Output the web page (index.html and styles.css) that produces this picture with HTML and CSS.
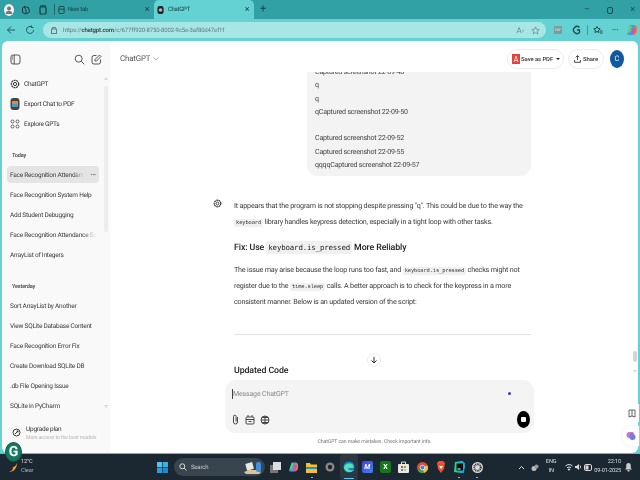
FILE: index.html
```html
<!DOCTYPE html>
<html lang="en">
<head>
<meta charset="utf-8">
<title>ChatGPT</title>
<link rel="stylesheet" href="styles.css">
</head>
<body>
<div class="screen">
  <div class="tabstrip">
    <div class="tab-tools">
      <span class="avatar-mini"><svg width="10" height="10" viewBox="0 0 10 10"><circle cx="5" cy="3.400" r="2" fill="#777"/><path d="M1.500 9c.4-2.400 1.800-3.300 3.500-3.300S8.100 6.600 8.500 9z" fill="#777"/></svg></span>
      <svg class="tool-icon" width="10" height="10" viewBox="0 0 10 10" fill="none" stroke="#1c3c40" stroke-width="1"><path d="M3 1.500 7.500 2.500 8.500 7 5 9 1.500 7.500V3z"/><path d="M3 1.500 5 5 5 9"/></svg>
      <svg class="tool-icon" width="10" height="10" viewBox="0 0 10 10" fill="none" stroke="#1c3c40" stroke-width="1.200"><rect x="2" y="2" width="6" height="7" rx="1"/><path d="M2 1h6" /></svg>
      <span class="tab-divider"></span>
    </div>
    <div class="tab">
      <svg width="7" height="10" viewBox="0 0 8 10" fill="none" stroke="#1c3c40"><rect x="1" y="1" width="6" height="8" rx="1"/><path d="M1 4h6"/></svg>
      <span class="tab-title">New tab</span>
      <span class="tab-close">×</span>
    </div>
    <div class="tab tab-active">
      <svg width="7" height="10" viewBox="0 0 8 10"><rect x=".5" y=".5" width="7" height="9" rx="2.500" fill="#222"/><circle cx="4" cy="5" r="2" fill="#bbb"/></svg>
      <span class="tab-title">ChatGPT</span>
      <span class="tab-close">×</span>
    </div>
    <span class="new-tab">+</span>
    <div class="win-controls">
      <span>–</span>
      <svg width="8" height="8" viewBox="0 0 8 8" fill="none" stroke="#17474a"><rect x="1.500" y="1.500" width="5" height="6" rx="1.500"/></svg>
      <span>×</span>
    </div>
  </div>

  <div class="toolbar">
    <svg class="nav-icon" width="10" height="10" viewBox="0 0 10 10" fill="none" stroke="#26565a" stroke-width="1"><path d="M9 5H1.500M5 1.500 1.500 5 5 8.500"/></svg>
    <svg class="nav-icon" width="10" height="10" viewBox="0 0 10 10" fill="none" stroke="#26565a" stroke-width="1"><path d="M8.500 5A3.500 3.500 0 1 1 6.500 1.800M6.500 .5V2.500H8.500"/></svg>
    <div class="address">
      <svg width="6" height="8" viewBox="0 0 6 8" fill="none" stroke="#5f7f80"><rect x=".5" y="3" width="5" height="4.500"/><path d="M1.500 3V1.500h3V3"/></svg>
      <span class="url"><span class="url-dim">https://</span><b>chatgpt.com</b><span class="url-dim">/c/677ff920-8750-8002-9c5e-3af80d47ef1f</span></span>
      <span class="addr-end">
        <span class="read-a">A<small>ᴬ</small></span>
        <svg width="9" height="9" viewBox="0 0 10 10" fill="none" stroke="#6a8f90" stroke-width=".9"><path d="m5 1 1.200 2.700 2.900.3-2.200 1.900.7 2.900L5 7.300 2.400 8.800l.7-2.900L.9 4l2.900-.3z"/></svg>
      </span>
    </div>
    <div class="ext-group">
      <span class="ext-pdf">PDF</span>
      <svg class="ext-g" width="9" height="10" viewBox="0 0 9 10" fill="none" stroke="#24484b" stroke-width="1.300"><path d="M7.500 2.500A3.500 3.500 0 1 0 7.500 7.500V5H5"/></svg>
      <span class="ext-divider"></span>
      <svg class="ext-fav" width="10" height="10" viewBox="0 0 10 10" fill="none" stroke="#24484b"><path d="m4 1.500 1 2 2.200.3-1.600 1.500.4 2.200-2-1-2 1 .4-2.200L.8 3.800 3 3.500z"/><path d="M7 6h2.500M7 8h2.500"/></svg>
      <span class="ext-more">···</span>
      <svg class="ext-copilot" width="12" height="12" viewBox="0 0 12 12"><path d="M4 1h4c1.500 0 2 1 1.500 2L7 11H3C1.500 11 1 10 1.500 9z" fill="#3aa0e8"/><path d="M8 1c2 0 3 1 3 3v3c0 2-2 4-4 4l2-6z" fill="#f0783c"/><path d="M1.500 9 4 2h2L4 8z" fill="#7ad04a"/><path d="M7 4l3 1-2 5-3 1z" fill="#d84fb0"/></svg>
    </div>
  </div>

  <div class="frame">
    <aside class="sidebar">
      <div class="side-head">
        <svg class="ink-icon" width="11" height="11" viewBox="0 0 11 11" fill="none" stroke="#444" stroke-width=".9"><rect x="1" y="1" width="9" height="9" rx="2"/><path d="M4.200 1v9"/><path d="M2 3h1M2 5h1" /></svg>
        <span class="side-head-right">
          <svg width="11" height="11" viewBox="0 0 11 11" fill="none" stroke="#444" stroke-width=".9"><circle cx="4.700" cy="4.700" r="3.500"/><path d="m7.300 7.300 3 3"/></svg>
          <svg width="11" height="11" viewBox="0 0 11 11" fill="none" stroke="#444" stroke-width=".9"><path d="M5.500 1.500H3A2 2 0 0 0 1 3.500v4.500a2 2 0 0 0 2 2h4.500a2 2 0 0 0 2-2V5.500"/><path d="M4 7V5.500L8.500 1 10 2.500 5.500 7z"/></svg>
        </span>
      </div>
      <div class="side-scroll">
        <div class="side-link"><svg width="10" height="10" viewBox="0 0 10 10" fill="none" stroke="#333"><circle cx="5" cy="5" r="3.700" stroke-dasharray="2 .6" stroke-width="1.200"/><circle cx="5" cy="5" r="1.600"/></svg><span>ChatGPT</span></div>
        <div class="side-link"><svg width="10" height="14" viewBox="0 0 10 14"><rect x=".5" y="1" width="9" height="12" rx="3" fill="#444"/><rect x="2" y="4" width="6" height="3" fill="#e58a3c"/><rect x="2" y="7" width="6" height="3" fill="#4a9ac2"/></svg><span>Export Chat to PDF</span></div>
        <div class="side-link"><svg width="10" height="10" viewBox="0 0 10 10" fill="none" stroke="#444" stroke-width=".8"><circle cx="2.500" cy="2.500" r="1.500"/><circle cx="7.500" cy="2.500" r="1.500"/><circle cx="2.500" cy="7.500" r="1.500"/><circle cx="7.500" cy="7.500" r="1.500"/></svg><span>Explore GPTs</span></div>
        <h3 class="side-label">Today</h3>
        <div class="chat chat-selected"><span class="chat-text fade">Face Recognition Attendance</span><span class="dots">···</span></div>
        <div class="chat"><span class="chat-text">Face Recognition System Help</span></div>
        <div class="chat"><span class="chat-text">Add Student Debugging</span></div>
        <div class="chat"><span class="chat-text fade">Face Recognition Attendance Sys</span></div>
        <div class="chat"><span class="chat-text">ArrayList of Integers</span></div>
        <h3 class="side-label label-second">Yesterday</h3>
        <div class="chat"><span class="chat-text">Sort ArrayList by Another</span></div>
        <div class="chat"><span class="chat-text">View SQLite Database Content</span></div>
        <div class="chat"><span class="chat-text">Face Recognition Error Fix</span></div>
        <div class="chat"><span class="chat-text">Create Download SQLite DB</span></div>
        <div class="chat"><span class="chat-text">.db File Opening Issue</span></div>
        <div class="chat"><span class="chat-text">SQLite in PyCharm</span></div>
        <div class="side-bar-track"><span class="arrow-up"></span><span class="thumb"></span><span class="arrow-down"></span></div>
      </div>
      <div class="upgrade">
        <span class="upgrade-icon"><svg width="9" height="9" viewBox="0 0 9 9" fill="none" stroke="#333" stroke-width="1"><circle cx="4.500" cy="4.500" r="3.500"/><path d="M3 6 6 3"/><path d="M4.500 3H6v1.500"/></svg></span>
        <div><div class="upgrade-title">Upgrade plan</div><div class="upgrade-sub">More access to the best models</div></div>
      </div>
    </aside>

    <main class="main">
      <header class="main-head">
        <div class="model">ChatGPT <svg width="6" height="4" viewBox="0 0 6 4" fill="none" stroke="#aaa"><path d="m.5.500 2.500 2.500L5.500.500"/></svg></div>
        <div class="head-actions">
          <button class="pill pill-pdf"><svg width="8" height="10" viewBox="0 0 8 10"><rect width="8" height="10" fill="#e2433a"/><path d="M4 2 2 8M4 2l2 6M2.500 6.500h3" stroke="#fff" stroke-width=".7" fill="none"/></svg>Save as PDF<span class="caret"></span></button>
          <button class="pill"><svg width="7" height="8" viewBox="0 0 7 8" fill="none" stroke="#333" stroke-width=".9"><path d="M3.500 5V.8M1.800 2.300 3.500.6l1.700 1.700M.6 5v2.300h5.800V5"/></svg>Share</button>
          <span class="user-avatar">C</span>
        </div>
      </header>
      <div class="conversation">
        <div class="thread">
          <div class="bubble">
            <p>Captured screenshot 22-09-48</p>
            <p>q</p>
            <p>q</p>
            <p>qCaptured screenshot 22-09-50</p>
            <p>&nbsp;</p>
            <p>Captured screenshot 22-09-52</p>
            <p>Captured screenshot 22-09-55</p>
            <p>qqqqCaptured screenshot 22-09-57</p>
          </div>
          <div class="answer">
            <span class="gpt-mark"><svg width="9" height="9" viewBox="0 0 10 10" fill="none" stroke="#333"><circle cx="5" cy="5" r="3.700" stroke-dasharray="2 .6" stroke-width="1.300"/><circle cx="5" cy="5" r="1.600"/></svg></span>
            <div class="answer-body">
              <p>It appears that the program is not stopping despite pressing "q". This could be due to the way the <code>keyboard</code> library handles keypress detection, especially in a tight loop with other tasks.</p>
              <h2>Fix: Use <code>keyboard.is_pressed</code> More Reliably</h2>
              <p>The issue may arise because the loop runs too fast, and <code>keyboard.is_pressed</code> checks might not register due to the <code>time.sleep</code> calls. A better approach is to check for the keypress in a more consistent manner. Below is an updated version of the script:</p>
              <hr>
              <h2 class="updated">Updated Code</h2>
            </div>
          </div>
        </div>
        <span class="scroll-down"><svg width="8" height="8" viewBox="0 0 8 8" fill="none" stroke="#333"><path d="M4 .8v6M1.500 4.500 4 7l2.500-2.500"/></svg></span>
        <div class="main-scroll"><span class="arrow-up"></span><span class="main-thumb"></span><span class="arrow-down"></span></div>
      </div>
      <div class="composer-wrap">
        <div class="composer">
          <div class="composer-input"><span class="caret-line"></span>Message ChatGPT<span class="dot"></span></div>
          <div class="composer-tools">
            <svg width="9" height="11" viewBox="0 0 9 11" fill="none" stroke="#333" stroke-width=".9"><path d="M6.500 3v5a2 2 0 0 1-4 0V2.500a1.300 1.300 0 0 1 2.600 0V7.500"/></svg>
            <svg width="10" height="11" viewBox="0 0 10 11" fill="none" stroke="#333" stroke-width=".9"><rect x="1" y="3" width="8" height="7" rx="1"/><path d="M1 5.500h8M3 3V1M7 3V1M3.500 7.500h3"/></svg>
            <svg width="10" height="10" viewBox="0 0 10 10" fill="none" stroke="#333" stroke-width=".9"><circle cx="5" cy="5" r="4"/><path d="M1 5h8M5 1v8M2 2.500h6M2 7.500h6"/></svg>
            <span class="stop"><span></span></span>
          </div>
        </div>
        <div class="disclaimer">ChatGPT can make mistakes. Check important info.</div>
      </div>
      <span class="float-btn float-book"><svg width="8" height="9" viewBox="0 0 8 9" fill="none" stroke="#444" stroke-width=".8"><path d="M1 1h6v7L4 7 1 8z"/><path d="M4 1v6"/></svg></span>
      <span class="float-btn float-brain"><svg width="10" height="10" viewBox="0 0 10 10"><circle cx="3.500" cy="4" r="3" fill="#d66fc0"/><circle cx="6.500" cy="6" r="3" fill="#6e7fe0"/><circle cx="6" cy="3" r="2" fill="#9a6fd8"/></svg></span>
    </main>
  </div>

  <span class="grammarly">G</span>

  <footer class="taskbar">
    <div class="weather">
      <svg width="10" height="11" viewBox="0 0 10 11"><path d="M9 1c0 5-3 9-8 9 3-1 4-3 4-5 2 0 3-2 4-4z" fill="#f09a2c"/></svg>
      <div><div>12°C</div><div class="weather-sub">Clear</div></div>
    </div>
    <div class="task-center">
      <svg class="win-logo" width="11" height="11" viewBox="0 0 11 11"><rect width="5.200" height="5.200" fill="#4fc3f0"/><rect x="5.800" width="5.200" height="5.200" fill="#35b0ea"/><rect y="5.800" width="5.200" height="5.200" fill="#2a9ee0"/><rect x="5.800" y="5.800" width="5.200" height="5.200" fill="#1c8ad4"/></svg>
      <div class="search-pill">
        <svg width="8" height="8" viewBox="0 0 8 8" fill="none" stroke="#ddd"><circle cx="3.300" cy="3.300" r="2.500"/><path d="m5.200 5.200 2.300 2.300"/></svg>
        <span>Search</span>
        <svg class="search-art" width="18" height="14" viewBox="0 0 18 14"><path d="M0 12 5 10h9l3 2-2 2H2z" fill="#d9c595"/><rect x="2" y="3" width="7" height="7" fill="#e8e8e8" transform="rotate(-15 5 6)"/><rect x="12" y="2" width="5" height="10" rx="2" fill="#3f8ee0"/></svg>
      </div>
      <span class="task-icon"><svg width="11" height="11" viewBox="0 0 11 11"><rect y="3" width="8" height="8" fill="#777"/><rect x="3" width="8" height="8" fill="#ddd"/></svg></span>
      <span class="task-icon"><svg width="11" height="12" viewBox="0 0 12 12"><path d="M4 1h4c1.500 0 2 1 1.500 2L7 11H3C1.500 11 1 10 1.500 9z" fill="#3aa0e8"/><path d="M8 1c2 0 3 1 3 3v3c0 2-2 4-4 4l2-6z" fill="#f0783c"/><path d="M1.500 9 4 2h2L4 8z" fill="#7ad04a"/><path d="M7 4l3 1-2 5-3 1z" fill="#d84fb0"/></svg></span>
      <span class="task-icon running"><svg width="11" height="11" viewBox="0 0 11 11"><path d="M0 1h4l1 1.500h6V11H0z" fill="#f3c12e"/><rect y="5" width="11" height="2" fill="#2a8cd8"/></svg></span>
      <span class="task-icon"><svg width="10" height="12" viewBox="0 0 10 12"><circle cx="5" cy="6" r="4.500" fill="#888"/><circle cx="5" cy="6" r="2.200" fill="#222"/></svg></span>
      <span class="task-icon task-active"><svg width="12" height="12" viewBox="0 0 12 12"><circle cx="6" cy="6" r="5.500" fill="#1788c9"/><path d="M1 7c0-4 6-6 9-3 1 1 1 3-1 3H5c0 2 3 3 6 2-2 3-9 3-10-2z" fill="#55e0b0"/></svg></span>
      <span class="task-icon"><span class="tile tile-m">M</span></span>
      <span class="task-icon"><span class="tile tile-x">X</span></span>
      <span class="task-icon"><svg width="11" height="12" viewBox="0 0 11 12"><rect y="3" width="11" height="9" rx="1" fill="#e8e8e8"/><path d="M3.500 3V1h4v2" stroke="#ddd" fill="none"/><rect x="3" y="5" width="2" height="2" fill="#e8452c"/><rect x="6" y="5" width="2" height="2" fill="#7ab82c"/><rect x="3" y="8" width="2" height="2" fill="#2c9ae8"/><rect x="6" y="8" width="2" height="2" fill="#f0b82c"/></svg></span>
      <span class="task-icon"><svg width="11" height="11" viewBox="0 0 11 11"><circle cx="5.500" cy="5.500" r="5.500" fill="#e24a3a"/><path d="M5.500 5.500 1 8.500A5.500 5.500 0 0 0 7 11z" fill="#3aa856"/><path d="M5.500 5.500 10.500 3.500A5.500 5.500 0 0 1 7 11z" fill="#f4c430"/><circle cx="5.500" cy="5.500" r="2.300" fill="#3f80e8" stroke="#fff" stroke-width=".7"/></svg></span>
      <span class="task-icon"><svg width="10" height="12" viewBox="0 0 10 12"><path d="M1 2 3 0h4l2 2-1 6-3 4-3-4z" fill="#f0532c"/><path d="M3 5h4L5 8z" fill="#fff"/></svg></span>
      <span class="task-icon running"><svg width="11" height="12" viewBox="0 0 11 12"><path d="M1 1 9 0 11 6 8 12 0 11z" fill="#21d789"/><path d="M5 0 11 2 10 12 3 11z" fill="#1aa6e8"/><rect x="2.500" y="2.500" width="6.500" height="7" fill="#111"/><rect x="3.500" y="7.500" width="3" height="1" fill="#fff"/></svg></span>
      <span class="task-icon running"><svg width="11" height="11" viewBox="0 0 11 11"><circle cx="5.500" cy="5.500" r="5.500" fill="#ddd"/><circle cx="5.500" cy="5.500" r="3.300" fill="none" stroke="#333" stroke-dasharray="1 .6" stroke-width="2"/></svg></span>
    </div>
    <div class="tray">
      <svg width="7" height="5" viewBox="0 0 7 5" fill="none" stroke="#ddd"><path d="m1 4 2.500-2.500L6 4"/></svg>
      <svg width="8" height="9" viewBox="0 0 8 9"><circle cx="3" cy="5.500" r="2.500" fill="#bbb"/><circle cx="5.500" cy="3.500" r="2" fill="#999"/></svg>
      <div class="lang"><div>ENG</div><div>IN</div></div>
      <span class="sys-icons">
        <svg width="8" height="8" viewBox="0 0 8 8" fill="none" stroke="#ddd"><path d="M.5 3a5 5 0 0 1 7 0M2 4.800a3 3 0 0 1 4 0"/><circle cx="4" cy="6.500" r=".7" fill="#ddd"/></svg>
        <svg width="7" height="8" viewBox="0 0 7 8" fill="#ddd"><path d="M0 3h1.500L4 1v6L1.500 5H0z"/><path d="M5 2.500c.8 1 .8 2 0 3" stroke="#ddd" fill="none"/></svg>
        <svg width="8" height="7" viewBox="0 0 8 7"><rect x=".5" y=".5" width="7" height="6" rx="1.500" fill="none" stroke="#ddd"/><rect x="1.500" y="1.500" width="3" height="4" fill="#ddd"/></svg>
      </span>
      <div class="clock"><div>22:10</div><div>09-01-2025</div></div>
      <svg width="7" height="9" viewBox="0 0 7 9" fill="#ccc"><path d="M3.500 0C2 0 1.200 1 1.200 2.500V5L0 6.500h7L5.800 5V2.500C5.800 1 5 0 3.500 0z"/><rect x="2.500" y="7" width="2" height="1.500"/></svg>
    </div>
  </footer>
</div>
</body>
</html>
```
FILE: styles.css
```css
* { box-sizing: border-box; }
html, body { margin: 0; height: 100%; overflow: hidden; }
body { font-family: Roboto, "Liberation Sans", sans-serif; color: #333; text-rendering: geometricPrecision; }
svg { display: block; flex: none; }
p, h2, h3, hr { margin: 0; }

.screen {
  position: relative;
  width: 640px;
  height: 480px;
  display: flex;
  flex-direction: column;
  overflow: hidden;
  filter: blur(0.35px);
}

/* Tab strip */
.tabstrip { height: 19px; background: #32a1a5; display: flex; align-items: stretch; flex: none; }
.tab-tools { width: 55px; display: flex; align-items: center; padding-left: 4px; }
.avatar-mini { width: 10px; height: 12px; border-radius: 50%; background: #f2f2f2; overflow: hidden; display: flex; align-items: center; }
.tool-icon { margin-left: 7px; }
.tab-divider { width: 1px; height: 11px; background: #1f6a6e; margin-left: 6px; }
.tab { width: 99px; padding: 0 3px 0 3px; display: flex; align-items: center; gap: 3px; font-size: 6px; color: #173f42; letter-spacing: -.3px; }
.tab-title { flex: 1; }
.tab-close { font-size: 9px; color: #173f42; width: 8px; text-align: center; }
.tab-active { width: 100px; background: #64d1d2; border-radius: 5px 5px 0 0; gap: 4px; }
.new-tab { width: 18px; text-align: center; font-size: 11px; line-height: 18px; color: #173f42; }
.win-controls { margin-left: auto; width: 56px; display: flex; align-items: center; justify-content: space-between; padding-right: 5px; color: #17474a; font-size: 9px; }

/* Toolbar */
.toolbar { height: 22px; background: #64d1d2; display: flex; align-items: center; padding-left: 6px; flex: none; }
.nav-icon { margin-right: 9px; }
.address { margin-left: -1px; width: 503px; height: 16px; border-radius: 8px; background: #a8e6e5; display: flex; align-items: center; padding: 0 6px 0 8px; gap: 6px; font-size: 6px; }
.url { color: #222; letter-spacing: -.13px; }
.url b { font-weight: 500; color: #333; }
.url-dim { color: #5c7d7e; }
.addr-end { margin-left: auto; display: flex; align-items: center; gap: 7px; color: #6a8f90; font-size: 8px; }
.read-a small { font-size: 5px; }
.ext-group { display: flex; align-items: center; margin-left: 8px; flex: 1; }
.ext-pdf { width: 8px; height: 8px; background: #7d9d9c; color: #e4f4f4; font-size: 3px; line-height: 8px; text-align: center; }
.ext-g { margin-left: 10px; }
.ext-divider { width: 1px; height: 10px; margin-left: 6px; background: #3e9a9c; }
.ext-fav { margin-left: 5px; }
.ext-more { margin-left: 9px; color: #24484b; font-size: 7px; font-weight: 700; }
.ext-copilot { margin-left: 8px; }

/* Frame */
.frame { flex: 1; min-height: 0; background: #64d1d2; padding: 0 2px 0 2px; display: flex; }
.sidebar { width: 108px; flex: none; background: #f9f9f9; border-radius: 6px 0 0 6px; display: flex; flex-direction: column; min-height: 0; }
.side-head { height: 33px; padding: 4px 8px 0 8px; display: flex; align-items: center; justify-content: space-between; flex: none; }
.side-head-right { display: flex; gap: 6px; }
.side-scroll { position: relative; flex: 1; min-height: 0; padding: 0 8px 0 5px; }
.side-link { height: 20px; display: flex; align-items: center; gap: 4px; padding-left: 3px; font-size: 6.500px; color: #333; letter-spacing: -.25px; width: 95px; }
.side-link svg { width: 10px; }
.side-label { font-size: 5.600px; font-weight: 500; color: #444; height: 12px; line-height: 12px; margin: 16px 0 4px 5px; letter-spacing: -.2px; }
.label-second { margin-top: 16px; margin-bottom: 3px; }
.chat { width: 92px; height: 20px; padding: 0 3px; display: flex; align-items: center; font-size: 6.500px; color: #3a3a3a; letter-spacing: -.23px; overflow: hidden; white-space: nowrap; }
.chat-selected { background: #e4e4e4; border-radius: 4px; height: 17px; margin-bottom: 2px; margin-top: 1px; }
.chat-text { flex: 1; overflow: hidden; }
.fade { -webkit-mask-image: linear-gradient(90deg, #000 85%, transparent); mask-image: linear-gradient(90deg, #000 85%, transparent); }
.dots { width: 12px; font-size: 7px; font-weight: 700; color: #555; text-align: right; }
.side-bar-track { position: absolute; top: 0; bottom: 12px; right: 2px; width: 5px; display: flex; flex-direction: column; align-items: center; }
.thumb { width: 4px; height: 146px; margin-top: 6px; border-radius: 2px; background: #ededed; }
.arrow-up { width: 0; height: 0; margin-top: 3px; border: 2.500px solid transparent; border-top: 0; border-bottom: 3px solid #d8d8d8; }
.arrow-down { width: 0; height: 0; margin-top: auto; border: 2.500px solid transparent; border-bottom: 0; border-top: 3px solid #d8d8d8; }
.upgrade { height: 33px; flex: none; display: flex; align-items: center; gap: 3px; padding: 0 0 8px 8px; }
.upgrade-icon { width: 13px; height: 13px; border-radius: 50%; background: #fff; border: 1px solid #eee; display: flex; align-items: center; justify-content: center; flex: none; }
.upgrade-title { font-size: 6.500px; color: #333; letter-spacing: -.23px; line-height: 10px; }
.upgrade-sub { font-size: 5.200px; color: #b5b5b5; letter-spacing: -.12px; line-height: 8px; white-space: nowrap; }

/* Main */
.main { position: relative; flex: 1; min-width: 0; background: #fff; border-radius: 0 6px 6px 0; display: flex; flex-direction: column; min-height: 0; }
.main-head { height: 31px; flex: none; display: flex; align-items: center; justify-content: space-between; padding: 4px 14px 0 10px; }
.model { display: flex; align-items: center; gap: 3px; font-size: 7.900px; color: #555; letter-spacing: -.15px; }
.head-actions { display: flex; align-items: center; gap: 4px; }
.pill { height: 20px; padding: 0 5px; border: 1px solid #ececec; border-radius: 10px; background: #fff; display: flex; align-items: center; gap: 2px; font: 500 6px Roboto, sans-serif; color: #333; letter-spacing: -.12px; }
.pill-pdf { padding: 0 3px 0 4px; gap: 1px; }
.caret { width: 0; height: 0; margin-left: 2px; border: 2px solid transparent; border-top: 2px solid #222; border-bottom: 0; }
.user-avatar { height: 18px; margin-left: 2px; width: 14px; border-radius: 50%; background: #0f5a9c; color: #e8f0f8; font-size: 7.500px; text-align: center; line-height: 18px; }

.conversation { position: relative; flex: 1; min-height: 0; overflow: hidden; }
.thread { margin-left: 122px; width: 307px; position: relative; }
.bubble { margin: -7px 0 0 75px; width: 224px; background: #f3f3f3; border-radius: 0 0 11px 11px; padding: 0 12px 6px 8px; font-size: 7.100px; line-height: 13.300px; color: #444; letter-spacing: -.22px; height: 111px; }
.bubble p { white-space: nowrap; }
.answer { position: relative; margin-top: 22px; padding-left: 2px; }
.gpt-mark { position: absolute; left: -19px; top: 1px; }
.answer-body { width: 297px; font-size: 7.200px; line-height: 16px; color: #3a3a3a; letter-spacing: -.19px; }
.answer-body code { font-family: "DejaVu Sans Mono", "Liberation Mono", monospace; font-size: 5.400px; line-height: 1; background: #f0f0f0; border-radius: 2px; padding: 1px 2px; letter-spacing: -.12px; }
.answer-body h2 { font-size: 8.800px; font-weight: 500; color: #222; line-height: 20px; margin: 8px 0 4px; letter-spacing: -.1px; }
.answer-body h2 code { font-size: 7.400px; padding: 2px 2px; letter-spacing: -.15px; }
.answer-body hr { border: 0; border-top: 1px solid #e3e3e3; margin: 24px 0 0 0; }
.answer-body h2.updated { margin-top: 26px; font-weight: 500; }
.scroll-down { position: absolute; left: 257px; top: 281px; width: 14px; height: 14px; background: #fff; border: 1px solid #eee; border-radius: 50%; display: flex; align-items: center; justify-content: center; }
.main-scroll { position: absolute; top: -26px; bottom: 2px; right: 0; width: 6px; display: flex; flex-direction: column; align-items: center; }
.main-thumb { margin-top: auto; width: 4px; height: 11px; background: #d4d4d4; border-radius: 2px; }
.main-scroll .arrow-down { margin-top: 8px; margin-bottom: 5px; }

.composer-wrap { flex: none; height: 73px; padding-left: 115px; }
.composer { width: 309px; height: 53px; background: #f4f4f4; border-radius: 11px; padding: 0 5px 0 7px; display: flex; flex-direction: column; }
.composer-input { height: 28px; display: flex; align-items: center; font-size: 7px; color: #8a8a8a; letter-spacing: -.15px; position: relative; }
.caret-line { width: 1px; height: 10px; background: #444; }
.dot { position: absolute; left: 276px; top: 12px; width: 3px; height: 3px; border-radius: 50%; background: #4a2cf0; }
.composer-tools { flex: 1; display: flex; align-items: center; gap: 5px; margin: -2px -1px 0 -1px; }
.stop { margin-left: auto; width: 13px; height: 17px; border-radius: 50%; background: #000; display: flex; align-items: center; justify-content: center; }
.stop span { width: 5px; height: 5px; background: #fff; border-radius: 1px; }
.disclaimer { margin-top: 5px; width: 299px; text-align: center; font-size: 5.200px; color: #777; line-height: 8px; letter-spacing: -.1px; }
.float-btn { position: absolute; right: -1px; width: 14px; display: flex; align-items: center; justify-content: center; background: #fff; }
.float-book { top: 363px; height: 18px; border-radius: 7px 0 0 7px; }
.float-brain { top: 385px; height: 20px; width: 17px; border-radius: 9px 0 0 9px; box-shadow: 0 0 3px #e6e6e6; }

/* Grammarly */
.grammarly { position: absolute; left: 5px; top: 442px; width: 17px; height: 20px; border-radius: 50%; background: #15795f; color: #fff; font: 700 14px/19px Roboto, sans-serif; text-align: center; border: 1px solid #0f5e49; z-index: 2; }

/* Taskbar */
.taskbar { height: 27px; flex: none; background: #1b2832; border-top: 1px solid #54c4c6; display: flex; align-items: center; color: #d9dde0; font-size: 5.600px; }
.weather { width: 155px; display: flex; align-items: center; gap: 3px; padding-left: 8px; line-height: 9px; letter-spacing: -.1px; }
.weather-sub { color: #a9b0b5; }
.task-center { display: flex; align-items: center; }
.win-logo { margin: 0 6px 0 2px; }
.search-pill { width: 91px; height: 18px; border-radius: 9px; background: #38444e; display: flex; align-items: center; gap: 4px; padding: 0 3px 0 5px; font-size: 6px; letter-spacing: -.2px; color: #c9ced2; margin-right: 1px; }
.search-art { margin-left: auto; }
.task-icon { position: relative; width: 18.400px; height: 26px; display: flex; align-items: center; justify-content: center; }
.task-active { background: #2b3843; border-radius: 3px; }
.task-active::after { content: ""; position: absolute; bottom: 1px; left: 4px; width: 10px; height: 1.500px; background: #5fc8f0; border-radius: 1px; }
.running::after { content: ""; position: absolute; bottom: 2px; left: 8px; width: 2px; height: 1.500px; background: #aaa; }
.tile { width: 11px; height: 12px; color: #fff; font-size: 7px; font-weight: 700; text-align: center; line-height: 12px; border-radius: 2px; }
.tile-m { background: linear-gradient(135deg, #4a3ae0, #3a8ae8); font-style: italic; }
.tile-x { background: #14791a; }
.tray { margin-left: 20px; flex: 1; display: flex; align-items: center; padding-right: 8px; white-space: nowrap; }
.tray > svg:first-child { margin-left: 11px; }
.tray > svg:nth-child(2) { margin-left: 6px; }
.lang { width: 19px; margin-left: 3px; text-align: center; line-height: 9px; letter-spacing: -.1px; }
.sys-icons { display: flex; align-items: center; gap: 2px; margin-left: 4px; }
.clock { margin-left: auto; margin-right: 4px; text-align: right; line-height: 9px; letter-spacing: -.15px; }
```
